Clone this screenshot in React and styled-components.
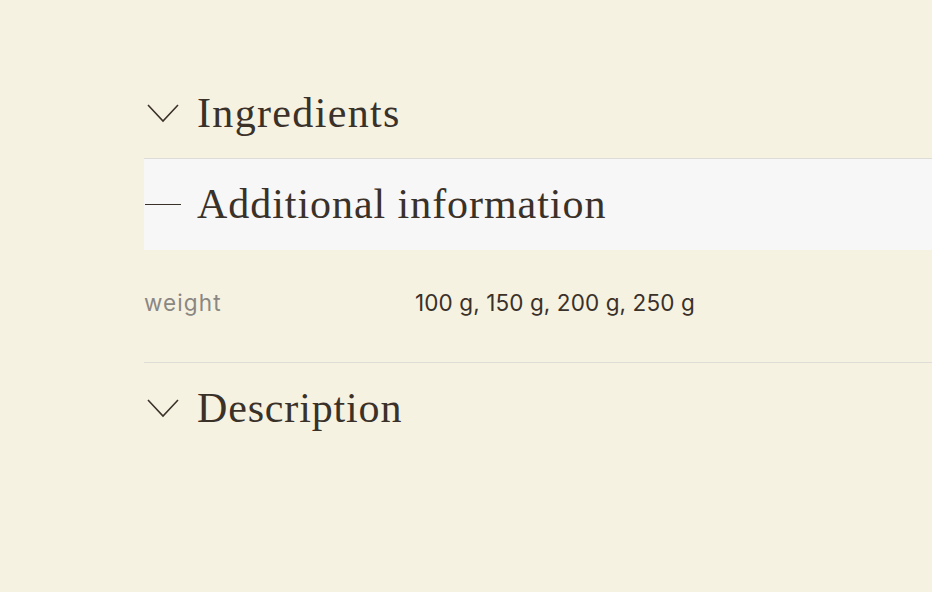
import React from 'react';
import styled, { createGlobalStyle } from 'styled-components';

const Global = createGlobalStyle`
  html, body {
    margin: 0;
    padding: 0;
    background: #f6f2e2;
    overflow: hidden;
  }
`;

const Page = styled.div`
  width: 932px;
  height: 592px;
  padding: 68px 0 0 144px;
  box-sizing: border-box;
`;

const Accordion = styled.div`
  display: flex;
  flex-direction: column;
`;

const Header = styled.div`
  height: 90px;
  display: flex;
  align-items: center;
  gap: 15px;
  background: ${p => (p.$open ? '#f7f7f7' : 'transparent')};
  border-bottom: 1px solid ${p => (p.$line ? '#dedcd6' : 'transparent')};
`;

const Icon = styled.span`
  width: 38px;
  display: flex;
  align-items: center;
  justify-content: center;
`;

const Title = styled.span`
  font-family: "Liberation Serif", serif;
  font-size: 42px;
  letter-spacing: ${p => p.$ls || '1px'};
  color: #3a3129;
`;

const Panel = styled.div`
  padding: 36px 0 44px;
  border-bottom: 1px solid #dedcd6;
`;

const Row = styled.div`
  display: grid;
  grid-template-columns: 271px 1fr;
  align-items: center;
  height: 32px;
  font-family: "Inter", "Open Sans", sans-serif;
  font-size: 22.5px;
`;

const Label = styled.span`
  color: #8a8782;
  letter-spacing: 1.1px;
`;

const Value = styled.span`
  color: #3a3129;
  letter-spacing: 0.1px;
`;

const Chevron = () => (
  <svg width="34" height="20" viewBox="0 0 34 20" fill="none">
    <path d="M2 2 L17 18 L32 2" stroke="#3a3129" strokeWidth="1.6" />
  </svg>
);

const Dash = styled.span`
  display: block;
  width: 36px;
  height: 1px;
  background: #3a3129;
`;

const App = () => (
  <>
    <Global />
    <Page>
      <Accordion>
        <Header $line>
          <Icon><Chevron /></Icon>
          <Title $ls="1.35px">Ingredients</Title>
        </Header>
        <Header $open>
          <Icon><Dash /></Icon>
          <Title $ls="0.95px">Additional information</Title>
        </Header>
        <Panel>
          <Row>
            <Label>weight</Label>
            <Value>100 g, 150 g, 200 g, 250 g</Value>
          </Row>
        </Panel>
        <Header>
          <Icon><Chevron /></Icon>
          <Title $ls="0.85px">Description</Title>
        </Header>
      </Accordion>
    </Page>
  </>
);

export default App;
